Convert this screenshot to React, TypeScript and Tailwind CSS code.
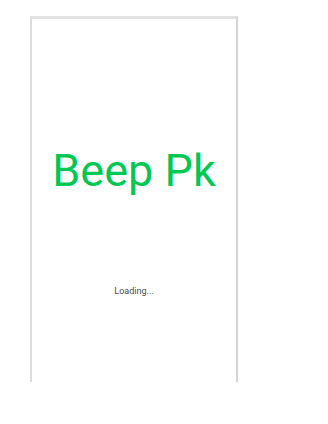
export default function App() {
  return (
    <div className="w-[328px] h-[424px] bg-white pt-[16px] pl-[30px]" style={{ fontFamily: 'Roboto, "Noto Sans", sans-serif' }}>
      <div className="w-[208px] h-[366px] bg-white border-t-[3px] border-l-[2px] border-r-[2px] border-t-[#e2e2e2] border-l-[#dcdcdc] border-r-[#d4d4d4] flex flex-col items-center">
        <div className="mt-[129px] text-[45px] leading-none text-[#00c853] whitespace-nowrap">Beep Pk</div>
        <div className="mt-[94px] text-[9px] leading-none text-[#4a4a4a] whitespace-nowrap">Loading...</div>
      </div>
    </div>
  );
}
